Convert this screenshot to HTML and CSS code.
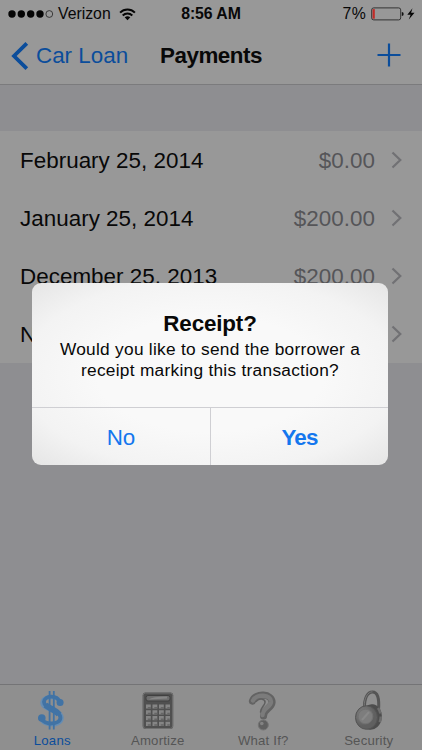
FILE: index.html
```html
<!DOCTYPE html>
<html lang="en">
<head>
<meta charset="utf-8">
<title>Payments</title>
<link rel="stylesheet" href="styles.css">
</head>
<body>
<div class="app">
  <header class="top">
    <div class="status">
      <div class="carrier">
        <svg width="46" height="10" viewBox="0 0 46 10"><g fill="#050505"><circle cx="4" cy="5" r="3.7"/><circle cx="13.3" cy="5" r="3.7"/><circle cx="22.7" cy="5" r="3.7"/><circle cx="32" cy="5" r="3.7"/></g><circle cx="41.3" cy="5" r="3.4" fill="none" stroke="#222" stroke-width=".8"/></svg>
        <span class="name">Verizon</span>
        <svg width="17" height="13" viewBox="0 0 17 13"><g fill="none" stroke="#050505" stroke-width="2"><path d="M1.1 4.6C5.2.5 11.8.5 15.9 4.6"/><path d="M3.7 7.5C6.4 4.9 10.6 4.9 13.3 7.5"/></g><path d="M5.7 9.2Q8.5 7.2 11.3 9.2L8.5 12.2z" fill="#050505"/></svg>
      </div>
      <div class="clock">8:56 AM</div>
      <div class="power">
        <span>7%</span>
        <svg width="45" height="16" viewBox="0 0 45 16"><rect x=".7" y="1.9" width="29" height="12" rx="2" fill="none" stroke="#333" stroke-width="1"/><path d="M1.6 3.1h2.2v9.6H1.6z" fill="#c22b27"/><path d="M30.8 6q1.9.2 1.9 2t-1.9 2z" fill="#111"/><path d="M41.5 2.2L36.3 8.7H39.6L37.8 13.6L43.5 6.7H40.1z" fill="#050505"/></svg>
      </div>
    </div>
    <nav class="nav">
      <a class="back"><svg width="18" height="30" viewBox="0 0 18 30"><path d="M15.8 2.3L3 15L15.8 27.7" fill="none" stroke="#0b4d9b" stroke-width="3.8"/></svg><span>Car Loan</span></a>
      <h1>Payments</h1>
      <svg class="add" width="24" height="24" viewBox="0 0 24 24"><path d="M12 .5v23M.5 12h23" stroke="#0b4d9b" stroke-width="2.2"/></svg>
    </nav>
  </header>
  <main class="content">
    <div class="row"><span>February 25, 2014</span><span class="amount">$0.00</span><svg class="chev" width="12" height="18" viewBox="0 0 12 18"><path d="M1.5 1.5L9.3 9L1.5 16.5"/></svg></div>
    <div class="row"><span>January 25, 2014</span><span class="amount">$200.00</span><svg class="chev" width="12" height="18" viewBox="0 0 12 18"><path d="M1.5 1.5L9.3 9L1.5 16.5"/></svg></div>
    <div class="row"><span>December 25, 2013</span><span class="amount">$200.00</span><svg class="chev" width="12" height="18" viewBox="0 0 12 18"><path d="M1.5 1.5L9.3 9L1.5 16.5"/></svg></div>
    <div class="row"><span>N</span><span class="amount"></span><svg class="chev" width="12" height="18" viewBox="0 0 12 18"><path d="M1.5 1.5L9.3 9L1.5 16.5"/></svg></div>
  </main>
  <footer class="tabs">
    <div class="tab active">
      <svg width="40" height="42" viewBox="0 0 40 42"><path d="M27.8 13C27.5 5.5 11.5 5 10.5 12.5C10 20 29.5 19.5 29.5 28C29 36.5 11 36 9.5 28.5" fill="none" stroke="#668db3" stroke-width="4.5"/><g fill="none" stroke="#4173a5"><path d="M17.6 1v38.5M21.8 1v38.5" stroke-width="1.8"/><path d="M27.3 11.5C25 5 12.5 5 12 12C12 18.5 28.2 19.5 28.4 27.8C28 35 12 35.5 9.5 28.5" stroke-width="3.8"/><path d="M13.5 15C18 19 24 20 27 24.5" stroke-width="6"/></g><circle cx="28.1" cy="12.6" r="3.5" fill="#4173a5"/><circle cx="9.8" cy="28" r="3.8" fill="#4173a5"/></svg>
      <span>Loans</span>
    </div>
    <div class="tab">
      <svg width="40" height="42" viewBox="0 0 40 42"><rect x="4.7" y="2.5" width="30.5" height="36.5" rx="3" fill="#505050"/><rect x="5.2" y="3" width="29.5" height="35.5" rx="2.5" fill="none" stroke="#707070"/><rect x="8" y="5.5" width="24" height="5.5" rx="2" fill="#6e6e6e" stroke="#404040"/><path d="M11 9.5q3-3 18-3v2z" fill="#868686"/><g stroke="#858585" stroke-width="4.2" stroke-dasharray="4.8 1.7"><path d="M8 16.5h24M8 22.3h24M8 28.1h24M8 33.9h24"/></g><g stroke="#666" stroke-width="1.5" stroke-dasharray="3 3.5"><path d="M9.8 17.7h22M9.8 23.5h22M9.8 29.3h22M9.8 35.1h22"/></g></svg>
      <span>Amortize</span>
    </div>
    <div class="tab">
      <svg width="40" height="42" viewBox="0 0 40 42"><g fill="none" stroke-linecap="round" stroke-linejoin="round"><path d="M9.5 11C12 2.5 29.5 3.5 29 12.5C28.5 18.5 20.5 19 20.5 26" stroke="#636363" stroke-width="7.2"/><path d="M10 10.5C13 3.5 28.5 4.5 28 12C27.5 17.5 19.5 18 19.5 25" stroke="#7b7b7b" stroke-width="4.4"/><path d="M13 11.5C17 7.5 22.5 9 22 12.5C21.5 16 18 17 17.5 22" stroke="#5f5f5f" stroke-width="1.5"/></g><circle cx="20.3" cy="35" r="5" fill="#606060" stroke="#747474"/><circle cx="18.8" cy="33.5" r="1.8" fill="#838383"/></svg>
      <span>What If?</span>
    </div>
    <div class="tab">
      <svg width="40" height="42" viewBox="0 0 40 42"><defs><radialGradient id="dial" cx=".35" cy=".35"><stop stop-color="#858585"/><stop offset="1" stop-color="#606060"/></radialGradient></defs><path d="M15.5 19C15 8 18.5 2 23.5 2S30.5 8 29.5 20" fill="none" stroke="#555" stroke-width="3"/><path d="M15.2 17C15 8 19 1.6 23.5 1.8" fill="none" stroke="#777"/><ellipse cx="22.2" cy="27" rx="10.6" ry="12.8" fill="#4d4d4d" transform="rotate(8 22 27)"/><path d="M29 18Q34 25 30 34" fill="none" stroke="#6d6d6d" stroke-width="2.5" stroke-dasharray="6 3"/><ellipse cx="17.5" cy="27.5" rx="11" ry="11.8" fill="url(#dial)" stroke="#545454"/><circle cx="16.5" cy="26.5" r="7.3" fill="#7d7d7d" stroke="#727272"/><path d="M13 30L20 22" stroke="#898989" stroke-width="2"/></svg>
      <span>Security</span>
    </div>
  </footer>
  <div class="overlay">
    <section class="alert">
      <div class="message"><h2>Receipt?</h2><p>Would you like to send the borrower a<br>receipt marking this transaction?</p></div>
      <div class="actions"><button class="no">No</button><button class="yes">Yes</button></div>
    </section>
  </div>
</div>
</body>
</html>
```
FILE: styles.css
```css
* { box-sizing: border-box; }
body { margin: 0; font-family: "Liberation Sans", Arial, sans-serif; color: #080808; }
svg { display: block; flex: none; }
.app { width: 422px; height: 750px; position: relative; display: flex; flex-direction: column; background: #8e8e91; overflow: hidden; }
.top { height: 85px; flex: none; background: #989898; border-bottom: 1px solid #7b7b7d; }
.status { height: 28px; display: grid; grid-template-columns: 1fr auto 1fr; align-items: center; font-size: 15.8px; padding: 0 6px 0 8px; }
.carrier { display: flex; align-items: center; }
.name { margin: 0 8px 0 4px; }
.clock { font-weight: bold; letter-spacing: -.05px; margin-right: 2px; }
.power { display: flex; align-items: center; justify-content: flex-end; gap: 5px; letter-spacing: .3px; }
.nav { height: 56px; display: grid; grid-template-columns: 1fr auto 1fr; align-items: center; padding: 0 21px 0 11px; font-size: 22.4px; }
.back { display: flex; align-items: center; gap: 7px; color: #0b4d9b; white-space: nowrap; }
h1 { margin: 0 0 0 10px; font-size: 22.4px; letter-spacing: -.45px; }
.add { justify-self: end; margin-top: -3px; }
.content { flex: 1; padding-top: 46px; }
.row { height: 58px; padding: 1px 19px 0 20px; background: #989898; display: flex; align-items: center; font-size: 22.4px; letter-spacing: .03px; }
.amount { margin-left: auto; margin-right: 16px; color: #555558; }
.chev { fill: none; stroke: #717174; stroke-width: 2.2; margin-top: -1px; }
.tabs { height: 66px; flex: none; display: grid; grid-template-columns: repeat(4, 1fr); background: #8f8f8f; border-top: 1px solid #747476; }
.tab { display: flex; flex-direction: column; align-items: center; padding: 5px 1px 0 0; font-size: 13.2px; line-height: 15px; letter-spacing: .2px; color: #555; }
.tab svg { filter: blur(.35px); }
.tab span { margin-top: 1px; }
.active { color: #0b4d9b; }
.overlay { position: absolute; inset: 0; display: flex; justify-content: center; align-items: flex-start; padding-top: 283px; padding-right: 2px; }
.alert { width: 356px; height: 182px; border-radius: 9px; overflow: hidden; background: radial-gradient(ellipse at center, #f9f9f9 45%, #f3f3f3 75%, #e5e5e5 100%); }
.message { height: 124px; padding-top: 27px; text-align: center; }
h2 { margin: 0; font-size: 22.4px; line-height: 28px; letter-spacing: -.15px; }
p { margin: 0; font-size: 17.3px; line-height: 21px; letter-spacing: .28px; padding-top: 1px; }
.actions { height: 58px; display: grid; grid-template-columns: 179px 1fr; border-top: 1px solid #cfcfd3; }
button { border: 0; background: none; padding: 2px 0 0; font-family: inherit; font-size: 22.4px; color: #1477ee; }
.no { border-right: 1px solid #cfcfd3; }
.yes { font-weight: bold; letter-spacing: -.8px; }
```
